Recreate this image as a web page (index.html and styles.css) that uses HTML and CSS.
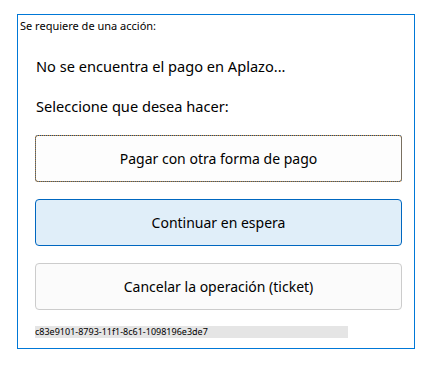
FILE: index.html
```html
<!DOCTYPE html>
<html lang="es">
<head>
<meta charset="utf-8">
<link rel="stylesheet" href="styles.css">
</head>
<body>
<div class="frame">
  <div class="title">Se requiere de una acción:</div>
  <div class="content">
    <p class="msg">No se encuentra el pago en Aplazo...</p>
    <p class="msg msg2">Seleccione que desea hacer:</p>
    <div class="buttons">
      <button class="btn btn-focus">Pagar con otra forma de pago</button>
      <button class="btn btn-primary">Continuar en espera</button>
      <button class="btn">Cancelar la operación (ticket)</button>
    </div>
    <div class="guid">c83e9101-8793-11f1-8c61-1098196e3de7</div>
  </div>
</div>
</body>
</html>
```
FILE: styles.css
```css
html, body {
  margin: 0;
  padding: 0;
  background: #ffffff;
}
body {
  font-family: "Segoe UI", "Noto Sans", "Open Sans", sans-serif;
  color: #000;
}
.frame {
  box-sizing: border-box;
  margin: 14px 0 0 17px;
  width: 398px;
  height: 335px;
  border: 1px solid #0078d7;
}
.title {
  font-size: 11px;
  line-height: 15px;
  padding: 3px 0 0 2px;
}
.content {
  padding: 0 12px 0 17px;
}
.msg {
  margin: 0;
  font-size: 14.6px;
  line-height: 20px;
  padding-left: 1px;
}
.msg:first-child {
  margin-top: 23px;
}
.msg2 {
  margin-top: 20px;
}
.buttons {
  display: flex;
  flex-direction: column;
  gap: 17px;
  margin-top: 19px;
}
.btn {
  box-sizing: border-box;
  width: 367px;
  height: 47px;
  font-family: inherit;
  font-size: 14px;
  color: #000;
  background: #fbfbfb;
  border: 1px solid #cccccc;
  border-radius: 4px;
  padding: 0;
  text-align: center;
}
.btn-focus {
  border: 1px dotted #1b4f86;
  border-radius: 3px;
  background: linear-gradient(#fdfdfd, #fdfdfd) padding-box, #d9923a border-box;
}
.btn-primary {
  background: #e0eef9;
  border-color: #0067c0;
}
.guid {
  margin-top: 16px;
  width: 313px;
  height: 12px;
  background: #e5e5e5;
  font-size: 9px;
  line-height: 12px;
  color: #000;
}
```
